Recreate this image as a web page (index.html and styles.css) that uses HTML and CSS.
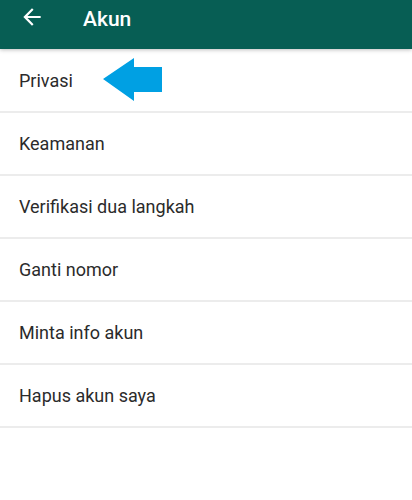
FILE: index.html
```html
<!DOCTYPE html>
<html lang="id">
<head>
<meta charset="utf-8">
<link rel="stylesheet" href="styles.css">
</head>
<body>
<header class="appbar">
  <svg class="back" viewBox="0 0 24 24" width="26" height="26"><path d="M20 11H7.83l5.59-5.59L12 4l-8 8 8 8 1.41-1.41L7.83 13H20v-2z" fill="#fff"/></svg>
  <h1 class="title">Akun</h1>
</header>
<ul class="list">
  <li class="item">Privasi
    <svg class="pointer" viewBox="0 0 60 44" width="60" height="44"><path d="M0 21 L31 0 L31 9 L59 9 L59 34 L31 34 L31 43 Z" fill="#00a0e3"/></svg>
  </li>
  <li class="item">Keamanan</li>
  <li class="item">Verifikasi dua langkah</li>
  <li class="item">Ganti nomor</li>
  <li class="item">Minta info akun</li>
  <li class="item">Hapus akun saya</li>
</ul>
</body>
</html>
```
FILE: styles.css
```css
html, body {
  margin: 0;
  padding: 0;
  background: #fff;
  font-family: Roboto, "Noto Sans", sans-serif;
}
.appbar {
  height: 49px;
  background: #075e54;
  display: flex;
  align-items: center;
  box-shadow: 0 1px 4px rgba(0,0,0,0.25);
  position: relative;
  z-index: 1;
}
.back {
  margin-left: 19px;
  margin-top: -15px;
  flex: none;
}
.title {
  margin: 0 0 0 38px;
  color: #fff;
  font-size: 21px;
  font-weight: 500;
  position: relative;
  top: -6px;
}
.list {
  list-style: none;
  margin: 0;
  padding: 0;
  margin-top: 1px;
}
.item {
  height: 61px;
  border-bottom: 2px solid #ececec;
  display: flex;
  align-items: center;
  padding-left: 19px;
  font-size: 18px;
  color: #2b2b2b;
  position: relative;
}
.pointer {
  position: absolute;
  left: 103px;
  top: 8px;
}
```
